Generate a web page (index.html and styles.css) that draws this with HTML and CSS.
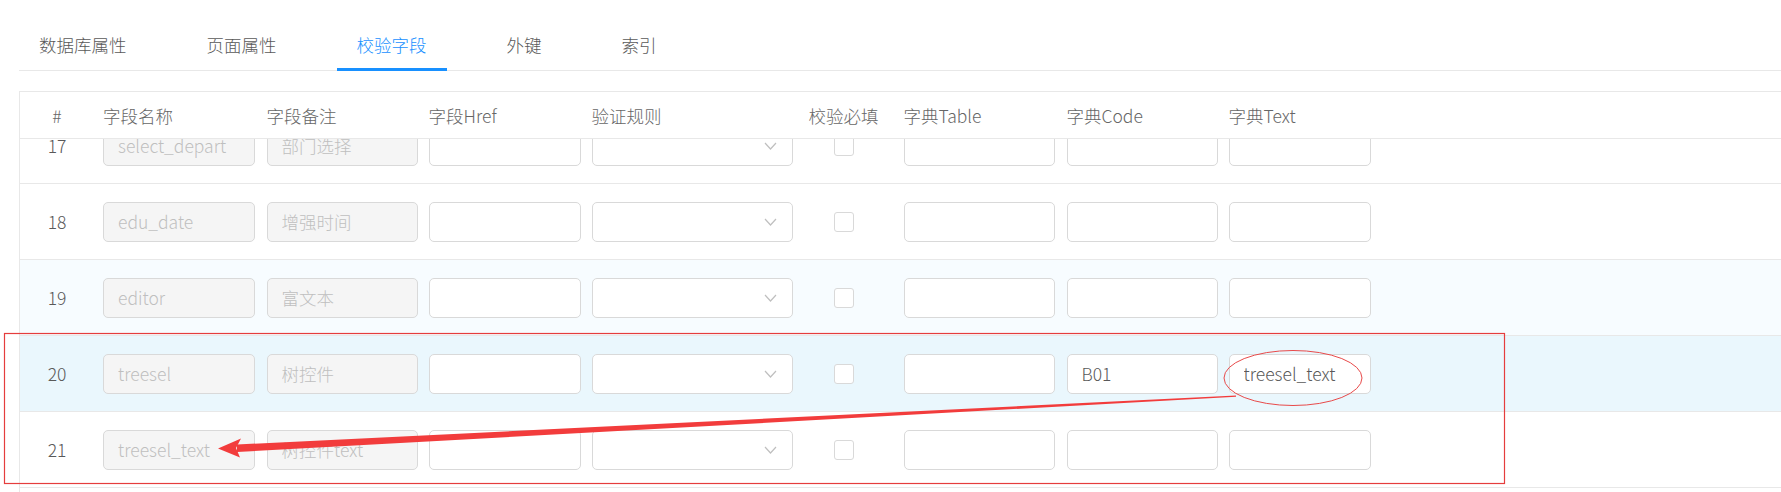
FILE: index.html
```html
<!DOCTYPE html>
<html lang="zh-CN">
<head>
  <meta charset="UTF-8" />
  <meta name="viewport" content="width=device-width, initial-scale=1" />
  <title>校验字段</title>
  <link rel="stylesheet" href="styles.css">
</head>
<body>
  <div class="page">
    <div class="tabs">
      <div class="tab">数据库属性</div>
      <div class="tab">页面属性</div>
      <div class="tab active">校验字段</div>
      <div class="tab">外键</div>
      <div class="tab">索引</div>
    </div>

    <div class="card">
      <div class="row head">
        <div class="num">#</div>
        <div>字段名称</div>
        <div>字段备注</div>
        <div>字段Href</div>
        <div>验证规则</div>
        <div>校验必填</div>
        <div>字典Table</div>
        <div>字典Code</div>
        <div>字典Text</div>
      </div>

      <div class="body">
        <div class="rows">
          <div class="row">
            <div class="num">17</div>
            <div><input class="ipt w152" disabled value="select_depart"></div>
            <div><input class="ipt w151" disabled value="部门选择"></div>
            <div><input class="ipt w152"></div>
            <div><div class="select"><svg width="13" height="8" viewBox="0 0 13 8"><path d="M1 1 L6.5 7 L12 1" fill="none" stroke="#bfbfbf" stroke-width="1.2"/></svg></div></div>
            <div><div class="check-wrap"><span class="check"></span></div></div>
            <div><input class="ipt w151"></div>
            <div><input class="ipt w151"></div>
            <div><input class="ipt w142"></div>
          </div>
          <div class="row">
            <div class="num">18</div>
            <div><input class="ipt w152" disabled value="edu_date"></div>
            <div><input class="ipt w151" disabled value="增强时间"></div>
            <div><input class="ipt w152"></div>
            <div><div class="select"><svg width="13" height="8" viewBox="0 0 13 8"><path d="M1 1 L6.5 7 L12 1" fill="none" stroke="#bfbfbf" stroke-width="1.2"/></svg></div></div>
            <div><div class="check-wrap"><span class="check"></span></div></div>
            <div><input class="ipt w151"></div>
            <div><input class="ipt w151"></div>
            <div><input class="ipt w142"></div>
          </div>
          <div class="row light">
            <div class="num">19</div>
            <div><input class="ipt w152" disabled value="editor"></div>
            <div><input class="ipt w151" disabled value="富文本"></div>
            <div><input class="ipt w152"></div>
            <div><div class="select"><svg width="13" height="8" viewBox="0 0 13 8"><path d="M1 1 L6.5 7 L12 1" fill="none" stroke="#bfbfbf" stroke-width="1.2"/></svg></div></div>
            <div><div class="check-wrap"><span class="check"></span></div></div>
            <div><input class="ipt w151"></div>
            <div><input class="ipt w151"></div>
            <div><input class="ipt w142"></div>
          </div>
          <div class="row hover">
            <div class="num">20</div>
            <div><input class="ipt w152" disabled value="treesel"></div>
            <div><input class="ipt w151" disabled value="树控件"></div>
            <div><input class="ipt w152"></div>
            <div><div class="select"><svg width="13" height="8" viewBox="0 0 13 8"><path d="M1 1 L6.5 7 L12 1" fill="none" stroke="#bfbfbf" stroke-width="1.2"/></svg></div></div>
            <div><div class="check-wrap"><span class="check"></span></div></div>
            <div><input class="ipt w151"></div>
            <div><input class="ipt w151" value="B01"></div>
            <div><input class="ipt w142" value="treesel_text"></div>
          </div>
          <div class="row">
            <div class="num">21</div>
            <div><input class="ipt w152" disabled value="treesel_text"></div>
            <div><input class="ipt w151" disabled value="树控件text"></div>
            <div><input class="ipt w152"></div>
            <div><div class="select"><svg width="13" height="8" viewBox="0 0 13 8"><path d="M1 1 L6.5 7 L12 1" fill="none" stroke="#bfbfbf" stroke-width="1.2"/></svg></div></div>
            <div><div class="check-wrap"><span class="check"></span></div></div>
            <div><input class="ipt w151"></div>
            <div><input class="ipt w151"></div>
            <div><input class="ipt w142"></div>
          </div>
        </div>
      </div>
    </div>

    <!-- 标注 -->
    <svg class="marks" width="1781" height="492" viewBox="0 0 1781 492">
      <rect x="4.5" y="333.5" width="1500" height="150" fill="none" stroke="#e53d3d" stroke-width="1.2"/>
      <ellipse cx="1293" cy="378" rx="69" ry="27.5" fill="none" stroke="#e84a4a" stroke-width="1"/>
      <polygon points="1236,395.6 1236,396.8 237,452 237,444.5" fill="#f23c3c"/>
      <polygon points="218,448.5 241,438.5 236,448 240,457.5" fill="#f23c3c"/>
    </svg>
  </div>
</body>
</html>
```

FILE: styles.css
```css
body {
  margin: 0;
  overflow: hidden;
  background: #fff;
  font-family: "Noto Sans CJK SC", "Noto Sans", sans-serif;
  font-size: 17.5px;
  font-weight: 300;
  color: #595959;
}
.page {
  position: relative;
  height: 492px;
  padding-top: 18px;
  box-sizing: border-box;
}
.tabs {
  display: flex;
  margin-left: 19px;
  border-bottom: 1px solid #e8e8e8;
}
.tab {
  position: relative;
  padding: 14px 20px 12px;
  margin-right: 40px;
  line-height: 26px;
  color: #595959;
}
.tab.active {
  color: #1890ff;
}
.tab.active::after {
  content: "";
  position: absolute;
  left: 0;
  right: 0;
  bottom: -1px;
  height: 3px;
  background: #1890ff;
}
.card {
  margin: 20px -2px 0 19px;
  border: 1px solid #e8e8e8;
  height: 460px;
}
.row {
  display: grid;
  grid-template-columns: 83px 163.5px 162px 163px 217px 95px 163px 162px 1fr;
  align-items: center;
  height: 75px;
  border-bottom: 1px solid #e8e8e8;
}
.row.head {
  height: 46px;
  color: #666;
}
.row.light {
  background: #f7fcff;
}
.row.hover {
  background: #eaf7fd;
}
.num {
  text-align: center;
  padding-right: 9px;
}
.body {
  overflow: hidden;
}
.rows {
  margin-top: -31px;
}
.ipt {
  display: block;
  box-sizing: border-box;
  height: 40px;
  padding: 0 14px;
  border: 1px solid #d9d9d9;
  border-radius: 5px;
  background: #fff;
  font-family: inherit;
  font-size: 17.5px;
  font-weight: 300;
  color: #595959;
  outline: none;
}
.ipt:disabled {
  background: #f5f5f5;
  color: #bfbfbf;
}
.w152 { width: 152px; }
.w151 { width: 151.5px; }
.w142 { width: 142px; }
.select {
  box-sizing: border-box;
  width: 201px;
  height: 40px;
  border: 1px solid #d9d9d9;
  border-radius: 5px;
  background: #fff;
  display: flex;
  align-items: center;
  justify-content: flex-end;
  padding-right: 15px;
}
.check-wrap {
  width: 70px;
  display: flex;
  justify-content: center;
}
.check {
  box-sizing: border-box;
  width: 20px;
  height: 20px;
  border: 1px solid #d9d9d9;
  border-radius: 3px;
  background: #fff;
}
.marks {
  position: absolute;
  left: 0;
  top: 0;
  pointer-events: none;
}
```
